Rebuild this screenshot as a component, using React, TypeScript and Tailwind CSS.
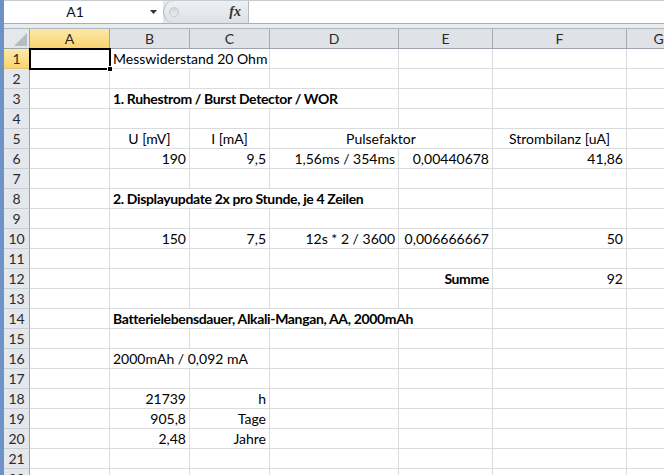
import React from 'react';

type Cell = { c: number; span?: number; t: string; a?: 'l' | 'r' | 'c'; b?: boolean };

const COLS = ['A', 'B', 'C', 'D', 'E', 'F', 'G'];

const sheet: Record<number, Cell[]> = {
  1: [{ c: 1, span: 2, t: 'Messwiderstand 20 Ohm' }],
  3: [{ c: 1, span: 3, t: '1. Ruhestrom / Burst Detector / WOR', b: true }],
  5: [
    { c: 1, t: 'U [mV]', a: 'c' },
    { c: 2, t: 'I [mA]', a: 'c' },
    { c: 3, span: 2, t: 'Pulsefaktor', a: 'c' },
    { c: 5, t: 'Strombilanz [uA]', a: 'c' },
  ],
  6: [
    { c: 1, t: '190', a: 'r' },
    { c: 2, t: '9,5', a: 'r' },
    { c: 3, t: '1,56ms / 354ms', a: 'r' },
    { c: 4, t: '0,00440678', a: 'r' },
    { c: 5, t: '41,86', a: 'r' },
  ],
  8: [{ c: 1, span: 3, t: '2. Displayupdate 2x pro Stunde, je 4 Zeilen', b: true }],
  10: [
    { c: 1, t: '150', a: 'r' },
    { c: 2, t: '7,5', a: 'r' },
    { c: 3, t: '12s * 2 / 3600', a: 'r' },
    { c: 4, t: '0,006666667', a: 'r' },
    { c: 5, t: '50', a: 'r' },
  ],
  12: [
    { c: 4, t: 'Summe', a: 'r', b: true },
    { c: 5, t: '92', a: 'r' },
  ],
  14: [{ c: 1, span: 4, t: 'Batterielebensdauer, Alkali-Mangan, AA, 2000mAh', b: true }],
  16: [{ c: 1, span: 2, t: '2000mAh / 0,092 mA' }],
  18: [
    { c: 1, t: '21739', a: 'r' },
    { c: 2, t: 'h', a: 'r' },
  ],
  19: [
    { c: 1, t: '905,8', a: 'r' },
    { c: 2, t: 'Tage', a: 'r' },
  ],
  20: [
    { c: 1, t: '2,48', a: 'r' },
    { c: 2, t: 'Jahre', a: 'r' },
  ],
};

// widths include the 1px right border of each cell
const gridCols = 'grid w-[687px] grid-cols-[26px_80px_80px_80px_129px_94px_134px_64px]';

function spanClass(span: number) {
  if (span === 2) return 'col-span-2';
  if (span === 3) return 'col-span-3';
  if (span === 4) return 'col-span-4';
  return 'col-span-1';
}

function Row({ n }: { n: number }) {
  const cells = sheet[n] || [];
  const out: React.ReactNode[] = [];
  let col = 0;
  while (col < COLS.length) {
    const cell = cells.find((x) => x.c === col);
    if (cell) {
      const span = cell.span || 1;
      out.push(
        <div
          key={col}
          className={`${spanClass(span)} h-[20px] border-r border-b border-[#dadcdd] flex items-center pt-[1px] whitespace-nowrap px-[3px] ${
            cell.a === 'r' ? 'justify-end' : cell.a === 'c' ? 'justify-center' : 'justify-start'
          } ${cell.b ? 'font-bold tracking-[-0.35px]' : ''}`}
        >
          {cell.t}
        </div>
      );
      col += span;
    } else {
      out.push(<div key={col} className="h-[20px] border-r border-b border-[#dadcdd]" />);
      col += 1;
    }
  }
  const active = n === 1;
  return (
    <div className={gridCols}>
      <div
        className={`h-[20px] border-r border-b flex items-center justify-center text-[#2a2a2a] ${
          active
            ? 'bg-gradient-to-b from-[#fde9a6] to-[#f9d46f] border-r-[#c2a55a] border-b-[#e0c27a]'
            : 'bg-[#e4e7ec] border-r-[#9ea5ae] border-b-[#c9ced5]'
        }`}
      >
        {n}
      </div>
      {out}
    </div>
  );
}

export default function App() {
  const rows = Array.from({ length: 22 }, (_, i) => i + 1);
  return (
    <div className="w-[664px] h-[475px] overflow-hidden flex bg-white text-[14px] text-black font-['Lato','Liberation_Sans',sans-serif] leading-none">
      <div className="w-[4px] shrink-0 bg-[#6d93c6]" />
      <div className="flex-1 flex flex-col min-w-0 overflow-hidden">
        {/* formula bar */}
        <div className="h-[24px] shrink-0 flex border-t border-b border-t-[#c7ccd3] border-b-[#a9afb7] bg-[#e3e6ea]">
          <div className="w-[159px] bg-white flex items-center">
            <div className="w-[142px] text-center text-[14px] text-[#111]">A1</div>
            <svg width="8" height="5" viewBox="0 0 8 5" className="ml-[4px]">
              <path d="M0 0 H7 L3.5 4 Z" fill="#333" />
            </svg>
          </div>
          <div className="w-[85px] h-full rounded-l-full border-l border-[#b4bac2] bg-gradient-to-b from-[#eef0f3] to-[#dde1e6] flex items-center">
            <div className="ml-[5px] w-[10px] h-[10px] rounded-full bg-gradient-to-b from-[#d2d6db] to-[#eceef1] border border-[#c6cbd1]" />
            <span className="ml-auto mr-[7px] font-['Liberation_Serif',serif] italic font-bold text-[14px] text-[#333]">
              fx
            </span>
          </div>
          <div className="flex-1 bg-white border-l border-[#b4bac2]" />
        </div>
        <div className="h-[4px] shrink-0 bg-[#e9ecef] border-b border-[#b0b6be] box-content" />
        {/* sheet */}
        <div className="relative">
          <div className={gridCols}>
            <div className="h-[20px] border-r border-b border-r-[#9ea5ae] border-b-[#9ea5ae] bg-[#e4e7ec] relative">
              <svg width="13" height="13" viewBox="0 0 13 13" className="absolute right-[2px] bottom-[2px]">
                <path d="M13 0 V13 H0 Z" fill="#b7bcc3" />
              </svg>
            </div>
            {COLS.map((c, i) => (
              <div
                key={c}
                className={`h-[20px] border-r border-b flex items-center justify-center text-[#2a2a2a] ${
                  i === 0
                    ? 'bg-gradient-to-b from-[#fde9a6] to-[#f9d46f] border-r-[#c2a55a] border-b-[#c2a55a]'
                    : 'bg-[#dfe3e8] border-r-[#a3aab3] border-b-[#9ea5ae]'
                }`}
              >
                {c}
              </div>
            ))}
          </div>
          {rows.map((n) => (
            <Row key={n} n={n} />
          ))}
          {/* active cell A1 */}
          <div className="absolute left-[25px] top-[19px] w-[82px] h-[22px] border-2 border-black pointer-events-none" />
          <div className="absolute left-[103px] top-[37px] w-[6px] h-[6px] bg-black border border-white pointer-events-none" />
        </div>
      </div>
    </div>
  );
}
